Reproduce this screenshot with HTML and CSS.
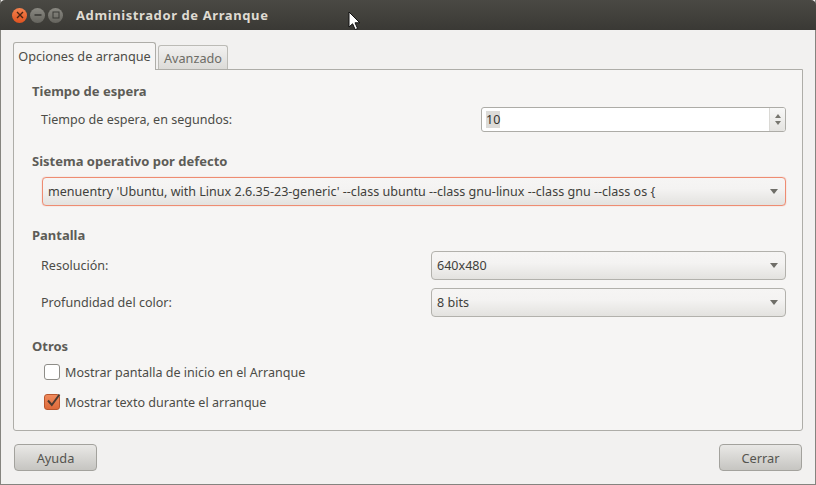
FILE: index.html
```html
<!DOCTYPE html>
<html lang="es">

<head>
    <meta charset="UTF-8">
    <title>Administrador de Arranque</title>
    <link rel="stylesheet" href="styles.css">
</head>

<body>

    <div class="window">
        <!-- Title bar -->
        <div class="titlebar">
            <div class="controls">
                <span class="ctl close">
                    <svg width="8" height="8" viewBox="0 0 8 8"><path d="M1 1L7 7M7 1L1 7" stroke="#4a2412" stroke-width="1.4" /></svg>
                </span>
                <span class="ctl">
                    <svg width="8" height="8" viewBox="0 0 8 8"><path d="M0.5 4H7.5" stroke="#3a3a36" stroke-width="1.6" /></svg>
                </span>
                <span class="ctl">
                    <svg width="8" height="8" viewBox="0 0 8 8"><rect x="1" y="1" width="6" height="6" fill="none" stroke="#3a3a36" stroke-width="1" /></svg>
                </span>
            </div>
            <div class="title">Administrador de Arranque</div>
        </div>

        <div class="content">
            <!-- Tabs -->
            <div class="tabs">
                <div class="tab active">Opciones de arranque</div>
                <div class="tab">Avanzado</div>
            </div>

            <div class="panel">
                <h2 class="first">Tiempo de espera</h2>
                <div class="row spin-row">
                    <label>Tiempo de espera, en segundos:</label>
                    <div class="spinbox">
                        <span class="spin-value"><span class="selected">10</span></span>
                        <span class="spin-arrows">
                            <svg width="6" height="4" viewBox="0 0 6 4"><path d="M3 0L6 4H0Z" fill="#77766f" /></svg>
                            <svg width="6" height="4" viewBox="0 0 6 4"><path d="M0 0H6L3 4Z" fill="#77766f" /></svg>
                        </span>
                    </div>
                </div>

                <h2 class="os-title">Sistema operativo por defecto</h2>
                <div class="combo focused">
                    <span>menuentry 'Ubuntu, with Linux 2.6.35-23-generic' --class ubuntu --class gnu-linux --class gnu --class os {</span>
                    <svg class="arrow" width="8" height="5" viewBox="0 0 8 5"><path d="M0 0H8L4 5Z" fill="#6f6e68" /></svg>
                </div>

                <h2 class="screen-title">Pantalla</h2>
                <div class="row combo-row">
                    <label>Resolución:</label>
                    <div class="combo short">
                        <span>640x480</span>
                        <svg class="arrow" width="8" height="5" viewBox="0 0 8 5"><path d="M0 0H8L4 5Z" fill="#6f6e68" /></svg>
                    </div>
                </div>
                <div class="row combo-row second">
                    <label>Profundidad del color:</label>
                    <div class="combo short">
                        <span>8 bits</span>
                        <svg class="arrow" width="8" height="5" viewBox="0 0 8 5"><path d="M0 0H8L4 5Z" fill="#6f6e68" /></svg>
                    </div>
                </div>

                <h2 class="other-title">Otros</h2>
                <div class="check-row">
                    <span class="check"></span>
                    <label>Mostrar pantalla de inicio en el Arranque</label>
                </div>
                <div class="check-row second-check">
                    <span class="check on">
                        <svg width="16" height="16" viewBox="0 0 16 16"><path d="M3 7.5L6.8 12L14.5 1.5" fill="none" stroke="#4a3a30" stroke-width="2" /></svg>
                    </span>
                    <label>Mostrar texto durante el arranque</label>
                </div>
            </div>

            <!-- Bottom buttons -->
            <div class="actions">
                <button>Ayuda</button>
                <button>Cerrar</button>
            </div>
        </div>
    </div>

    <svg class="cursor" width="13" height="20" viewBox="0 0 13 20">
        <path d="M1 1V16L4.6 12.8L7.2 18.6L9.6 17.5L7 11.8H11.8Z" fill="#fff" stroke="#111" stroke-width="1" />
    </svg>

</body>

</html>
```

FILE: styles.css
```css
html,
body {
    margin: 0;
    padding: 0;
}

body {
    width: 816px;
    height: 485px;
    overflow: hidden;
    position: relative;
    font-family: 'Noto Sans', 'Open Sans', sans-serif;
    font-size: 12.56px;
    color: #4c4c47;
    background-color: #f2f1f0;
}

.window {
    height: 485px;
    display: flex;
    flex-direction: column;
    box-sizing: border-box;
    border-left: 1px solid #85847f;
    border-right: 1px solid #85847f;
    border-bottom: 1px solid #85847f;
}

.titlebar {
    height: 30px;
    margin: 0 -1px;
    display: flex;
    align-items: center;
    padding-left: 12px;
    background: linear-gradient(#4a4944, #3a3935);
    border-radius: 5px 5px 0 0;
}

.controls {
    display: flex;
    gap: 3px;
}

.ctl {
    width: 15px;
    height: 15px;
    border-radius: 50%;
    display: flex;
    align-items: center;
    justify-content: center;
    background: linear-gradient(#8a8982, #65645e);
}

.ctl.close {
    background: linear-gradient(#f5824e, #df5320);
}

.title {
    margin-left: 13px;
    font-size: 13px;
    font-weight: 700;
    letter-spacing: 0.6px;
    color: #dfdbd2;
}

.content {
    flex: 1;
    display: flex;
    flex-direction: column;
    padding: 12px 12px 0 12px;
}

.tabs {
    display: flex;
    align-items: flex-end;
    gap: 2px;
    height: 28px;
    position: relative;
    z-index: 1;
}

.tab {
    height: 24px;
    width: 70px;
    box-sizing: border-box;
    border: 1px solid #bcbbb6;
    border-bottom: none;
    border-radius: 3px 3px 0 0;
    text-align: center;
    line-height: 25px;
    font-size: 12.7px;
    color: #6d6c66;
    background: linear-gradient(#f2f1f0, #dcdbd8);
    margin-bottom: 1px;
}

.tab.active {
    height: 28px;
    width: 143px;
    margin-bottom: 0;
    line-height: 26px;
    color: #4c4c47;
    border-color: #aeada8;
    background: #f6f5f4;
}

.panel {
    height: 362px;
    box-sizing: border-box;
    margin-top: -1px;
    padding: 0 16px 0 18px;
    background-color: #f6f5f4;
    border: 1px solid #aeada8;
    border-radius: 0 0 3px 3px;
}

h2 {
    margin: 0;
    font-size: 13px;
    line-height: 18px;
    font-weight: 700;
    color: #5d5c57;
}

h2.first {
    margin-top: 12px;
}

h2.os-title {
    margin-top: 20px;
}

h2.screen-title {
    margin-top: 20px;
}

h2.other-title {
    margin-top: 20px;
}

.row {
    display: flex;
    justify-content: space-between;
    align-items: center;
    margin-left: 9px;
}

.spin-row {
    margin-top: 7px;
}

.combo-row {
    margin-top: 7px;
}

.combo-row.second {
    margin-top: 8px;
}

.spinbox {
    width: 305px;
    height: 25px;
    box-sizing: border-box;
    display: flex;
    background-color: #fff;
    border: 1px solid #adaca7;
    border-radius: 3px;
}

.spin-value {
    flex: 1;
    padding-left: 4px;
    line-height: 23px;
    color: #33332f;
}

.selected {
    background-color: #dcdbd8;
}

.spin-arrows {
    width: 15px;
    display: flex;
    flex-direction: column;
    align-items: center;
    justify-content: center;
    gap: 3px;
    border-left: 1px solid #dad9d5;
    background: linear-gradient(#f8f8f7, #e4e3e0);
    border-radius: 0 2px 2px 0;
}

.combo {
    display: flex;
    align-items: center;
    justify-content: space-between;
    box-sizing: border-box;
    height: 29px;
    padding: 0 7px 0 5px;
    border: 1px solid #b2b1ac;
    border-radius: 4px;
    background: linear-gradient(#f6f5f4, #f4f3f2 40%, #e3e2df);
    color: #3f3f3b;
}

.combo.focused {
    margin-top: 7px;
    margin-left: 10px;
    height: 29px;
    border-color: #ee8c72;
    box-shadow: 0 0 1px #ee8c72;
}

.combo.short {
    width: 355px;
}

.arrow {
    flex: none;
}

label {
    color: #4c4c47;
}

.check-row {
    display: flex;
    align-items: center;
    height: 18px;
    gap: 5px;
    margin-top: 8px;
    margin-left: 12px;
}

.check-row.second-check {
    margin-top: 12px;
}

.check {
    width: 14px;
    height: 14px;
    flex: none;
    position: relative;
    background-color: #fff;
    border: 1px solid #8e8d88;
    border-radius: 3px;
}

.check.on {
    background: linear-gradient(#f08a5c, #dd6a3a);
    border-color: #b9562d;
}

.check.on svg {
    position: absolute;
    left: 0;
    top: -2px;
}

.actions {
    display: flex;
    justify-content: space-between;
    margin-top: 13px;
    padding: 0 1px;
}

.actions button {
    width: 83px;
    height: 27px;
    font-family: inherit;
    font-size: 12.8px;
    color: #55544f;
    background: linear-gradient(#e9e8e6, #c6c5c1);
    border: 1px solid #a3a29d;
    border-radius: 4px;
    padding: 0;
}

.cursor {
    position: absolute;
    left: 348px;
    top: 11px;
}
```
